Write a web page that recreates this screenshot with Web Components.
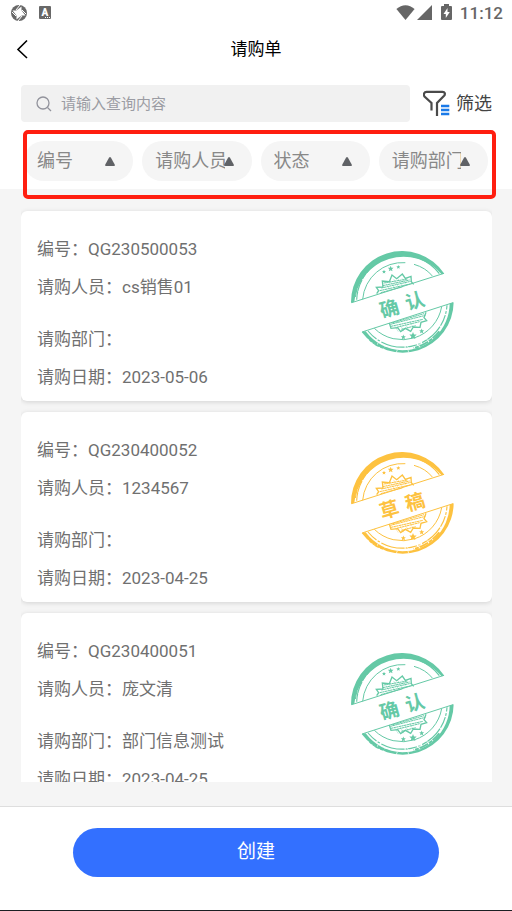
<!DOCTYPE html>
<html lang="zh-CN">
<head>
<meta charset="utf-8">
<meta name="viewport" content="width=device-width, initial-scale=1">
<title>请购单</title>
<style>
html, body { height: 100%; }
body { margin: 0; background: #f5f5f5; font-family: Roboto, "Noto Sans CJK SC", sans-serif; color: #666; }
</style>
</head>
<body>
<purchase-page></purchase-page>
<script>
const define = (name, html, setup) => {
  const template = document.createElement('template');
  template.innerHTML = html;
  customElements.define(name, class extends HTMLElement {
    constructor() {
      super();
      this.attachShadow({ mode: 'open' }).append(template.content.cloneNode(true));
    }
    connectedCallback() { if (setup) setup(this, this.shadowRoot); }
  });
};

define('status-bar', `
<style>
:host { display: flex; align-items: center; height: 26px; padding: 0 9px 0 11px; font-size: 17px; font-weight: 500; color: #666; }
svg { display: block; flex: none; }
.sync { margin-right: 12px; }
.push { flex: 1; }
.signal { margin: 0 9px 0 2px; }
.time { margin-left: 8px; }
</style>
<svg class="sync" width="16" height="26" viewBox="0 0 16 26"><circle cx="8" cy="13" r="8" fill="#686868"/><path d="M8 8.500 10.500 6.500 10.500 10.200 12.500 13 14.500 15.500 10.800 15.500 8 17.500 5.500 19.500 5.500 15.800 3.500 13 1.500 10.500 5.200 10.500Z" fill="#fff"/><path d="m5 10 4-5M11 10l4 4M11 16l-4 5M5 16l-4-4" stroke="#fff" stroke-width="1"/></svg>
<svg width="12" height="26" viewBox="0 0 12 26"><rect y="6" width="12" height="13" rx="1" fill="#686868"/><text x="6" y="15.5" text-anchor="middle" font-size="10" font-weight="900" fill="#fff">A</text><path d="M6 17.5h1m1 0h1m1 0h1" stroke="#fff"/></svg>
<span class="push"></span>
<svg width="19" height="26" viewBox="0 0 19 26"><path d="M.4 9C6 3.900 13 3.900 18.600 9L9.500 20Z" fill="#666"/></svg>
<svg class="signal" width="15" height="26" viewBox="0 0 15 26"><path d="M0 20 15 5v15Z" fill="#666"/></svg>
<svg width="11" height="26" viewBox="0 0 11 26"><path d="M3 4h5v2h2q1 0 1 1v12q0 1-1 1H1q-1 0-1-1V7q0-1 1-1h2Z" fill="#666"/><path d="M6.500 8 2.500 14h2.300v4l4-6H6.500Z" fill="#fff"/></svg>
<span class="time">11:12</span>
`);

define('title-bar', `
<style>
:host { display: grid; grid-template-columns: 48px 1fr 48px; align-items: center; height: 44px; }
button { width: 48px; height: 44px; padding: 2px 0 0 15px; border: 0; background: none; }
svg { display: block; }
h1 { margin: 0; padding-top: 1px; text-align: center; font-size: 17px; line-height: 24px; font-weight: 400; color: #000; }
</style>
<button type="button" aria-label="返回"><svg width="14" height="20" viewBox="0 0 14 20"><path d="M12 1.500 3 10.500l9 8.500" fill="none" stroke="#000" stroke-width="1.600"/></svg></button>
<h1><slot></slot></h1>
`);

define('search-row', `
<style>
:host { display: flex; padding: 15px 20px 0 21px; height: 37px; align-items: center; }
label { flex: 1; min-width: 0; display: flex; align-items: center; gap: 9px; height: 37px; padding: 0 15px; background: #f1f1f1; border-radius: 4px; }
input { flex: 1; min-width: 0; border: 0; padding: 0; outline: 0; background: none; font: 15px/22px Roboto, "Noto Sans CJK SC", sans-serif; color: #444; }
input::placeholder { color: #9b9ca3; opacity: 1; }
svg { display: block; flex: none; }
button { display: flex; align-items: center; gap: 5px; margin-left: 13px; padding: 0; border: 0; background: none; font: 18px/26px Roboto, "Noto Sans CJK SC", sans-serif; color: #444; }
</style>
<label><svg width="16" height="16" viewBox="0 0 16 16"><circle cx="7" cy="7" r="6" fill="none" stroke="#92939c" stroke-width="1.300"/><path d="m11.500 11.500 3.500 3.500" stroke="#92939c" stroke-width="1.300"/></svg><input type="search" placeholder="请输入查询内容" aria-label="查询内容"></label>
<button type="button"><svg width="28" height="28" viewBox="0 0 28 28"><path d="M8.500 20.500v-7.500L1.500 6.500Q.400 5 1.200 3.200 1.800 1.800 3.500 1.800h16q1.800 0 2.300 1.400.300 1.500-.700 2.600L14 13V26" fill="none" stroke="#4a4a4a" stroke-width="2.200"/><path d="M18 16h8.300M18 20h8.300M18 24h8.300" stroke="#1a7ae8" stroke-width="2.600"/></svg><span>筛选</span></button>
`);

define('filter-chip', `
<style>
:host { display: block; flex: 1; min-width: 0; }
button { display: flex; align-items: center; width: 100%; height: 40px; padding: 0 18px 0 13px; border: 0; border-radius: 20px; background: #f5f5f5; font: 18px/26px Roboto, "Noto Sans CJK SC", sans-serif; color: #888; text-align: left; }
span { flex: 1; min-width: 0; overflow: hidden; white-space: nowrap; }
svg { flex: none; display: block; margin-left: -1px; }
</style>
<button type="button" aria-expanded="true"><span><slot></slot></span><svg width="10" height="9" viewBox="0 0 10 9"><path d="M5 0q.500 0 1 .800l3.700 6.700q.700 1.500-.700 1.500H1q-1.400 0-.700-1.500L4 .800Q4.500 0 5 0Z" fill="#606266"/></svg></button>
`);

define('filter-bar', `
<style>
:host { display: flex; gap: 9px; position: relative; padding: 19px 24px 8px; }
.frame { position: absolute; inset: 8px 16px -10px 23px; border: 4px solid #ff1e10; border-radius: 5px; pointer-events: none; z-index: 2; }
</style>
<slot></slot><div class="frame"></div>
`);

define('status-stamp', `
<style>
:host { display: block; color: #65c9a6; }
:host([kind="draft"]) { color: #fdc240; }
svg { display: block; width: 130px; height: 125px; }
text { font: 700 58px "Noto Sans CJK SC", sans-serif; fill: currentColor; text-anchor: middle; }
</style>
<svg viewBox="0 0 390 375" fill="none" stroke="currentColor" role="img">
  <defs>
    <path id="star" d="M0-10 2.800-3.500 10-3 4.500 2 6.500 9 0 5.500-6.500 9-4.500 2-10-3-2.800-3.500Z" fill="currentColor" stroke="none"/>
  </defs>
  <g fill="currentColor" stroke="none">
    <path d="M33 186A153 153 0 0 1 313 98l-8 2A149 149 0 0 0 43 182Z"/>
    <path d="M341 184A153 153 0 0 1 65 273l12-2A146 146 0 0 0 187 328 142 142 0 0 0 329 188Z"/>
  </g>
  <path d="M35 185 312 97M66 273 339 185" stroke-width="3"/>
  <path d="M50 176A138 138 0 0 1 298 98" stroke-width="3.500" stroke-dasharray="62 3 18 4 90 2"/>
  <path d="M46 168A144 144 0 0 1 126 57" stroke-width="3" stroke-dasharray="24 3 8 4 33 3"/>
  <path d="M84 270A134 134 0 0 0 321 193" stroke-width="3.500" stroke-dasharray="35 4 8 5 72 3"/>
  <path d="M298 271A140 140 0 0 1 221 321" stroke-width="6" stroke-dasharray="29 2 12 3"/>
  <path d="M68 175A120 120 0 0 1 196 65M222 70Q257 80 277 105M103 262A120 120 0 0 0 305 197" stroke-width="3"/>
  <path d="m110 158 6-9-7-10 20-1-2-18 21 2 8-20 14 11 17-14 9 13 17-6 1 16 7 8M148 246l5 16 20-2 9 12 14-10 16 9 8-13 20 1 3-15 17-5-8-9 6-16" stroke-width="4"/>
  <path d="m128 134 81-17M124 141l88-20M119 149l96-21M122 155l65-17M131 126l72-12M151 250l105-27M153 256l96-21M170 259l69-17M156 246l96-28M184 265l43-11" stroke-width="3" stroke-dasharray="7 1"/>
  <path d="m138 127 14 22m-3-30 17 25m-5-30 16 27m-3-28 15 24m-3-25 13 21m-35 122 11 17m4-22 13 21m2-25 12 20m3-26 9 16" stroke-width="1"/>
  <use href="#star" transform="translate(132 92) scale(.600)"/>
  <use href="#star" transform="translate(152 83) scale(.850)"/>
  <use href="#star" transform="translate(175 78) scale(.600)"/>
  <use href="#star" transform="translate(190 288) scale(.750)"/>
  <use href="#star" transform="translate(219 284) scale(1.100)"/>
  <use href="#star" transform="translate(245 270) scale(.750)"/>
  <path d="m54 151 8 4m-2-18 7 4m-9 150 10-8m39 37 7-14m15 22 7-13m32 21 4-9m34 7-3-11m37-3-5-9m-26 15-7-11m-90-4-11 10m128-18 16 6m8-19 10 6m4-29 7 5" stroke="#fff" stroke-width="2"/>
  <path d="M89 296q18 18 36 23l21 5" stroke-width="5" stroke-dasharray="9 3 5 2 15 4"/>
  <g stroke="none"><text class="a" transform="translate(154 223) rotate(-16)"></text><text class="b" transform="translate(230 200) rotate(-16)"></text></g>
</svg>
`, (host, root) => {
  const label = host.getAttribute('label');
  root.querySelector('svg').setAttribute('aria-label', label);
  root.querySelector('.a').textContent = label[0];
  root.querySelector('.b').textContent = label[1];
});

define('request-card', `
<style>
:host { display: flex; justify-content: space-between; align-items: flex-start; flex: none; background: #fff; border-radius: 6px; box-shadow: 0 1px 5px rgba(0,0,0,.14); padding: 26px 22px 12px 16px; }
dl { margin: 0; display: grid; gap: 14px; font-size: 17px; line-height: 24px; color: #707070; }
div { display: flex; white-space: nowrap; }
.dept { margin-top: 14px; }
dt, dd { margin: 0; }
::slotted(status-stamp) { margin-top: 4px; }
</style>
<dl>
<div><dt>编号：</dt><dd><slot name="code"></slot></dd></div>
<div><dt>请购人员：</dt><dd><slot name="person"></slot></dd></div>
<div class="dept"><dt>请购部门：</dt><dd><slot name="dept"></slot></dd></div>
<div><dt>请购日期：</dt><dd><slot name="date"></slot></dd></div>
</dl>
<slot name="stamp"></slot>
`);

define('request-list', `
<style>
:host { display: flex; flex-direction: column; gap: 11px; flex: 1; min-height: 0; overflow-y: auto; scrollbar-width: none; margin: 12px 20px 24px 21px; padding-top: 10px; }
</style>
<slot></slot>
`);

define('action-footer', `
<style>
:host { display: block; padding: 21px 73px 33px; background: #fff; border-top: 1px solid #dedede; border-bottom: 1px solid #1b1f22; }
button { display: block; width: 100%; height: 49px; padding: 0 0 2px; border: 0; border-radius: 25px; background: #3370ff; color: #fff; font: 19px/28px Roboto, "Noto Sans CJK SC", sans-serif; }
</style>
<button type="button"><slot></slot></button>
`);

define('purchase-page', `
<style>
:host { display: flex; flex-direction: column; height: 100vh; background: #f5f5f5; }
header { background: #fff; }
</style>
<header>
  <status-bar></status-bar>
  <title-bar>请购单</title-bar>
  <search-row></search-row>
  <filter-bar><filter-chip>编号</filter-chip><filter-chip>请购人员</filter-chip><filter-chip>状态</filter-chip><filter-chip>请购部门</filter-chip></filter-bar>
</header>
<request-list>
  <request-card><span slot="code">QG230500053</span><span slot="person">cs销售01</span><span slot="date">2023-05-06</span><status-stamp slot="stamp" label="确认"></status-stamp></request-card>
  <request-card><span slot="code">QG230400052</span><span slot="person">1234567</span><span slot="date">2023-04-25</span><status-stamp slot="stamp" label="草稿" kind="draft"></status-stamp></request-card>
  <request-card><span slot="code">QG230400051</span><span slot="person">庞文清</span><span slot="dept">部门信息测试</span><span slot="date">2023-04-25</span><status-stamp slot="stamp" label="确认"></status-stamp></request-card>
</request-list>
<action-footer>创建</action-footer>
`);
</script>
</body>
</html>
